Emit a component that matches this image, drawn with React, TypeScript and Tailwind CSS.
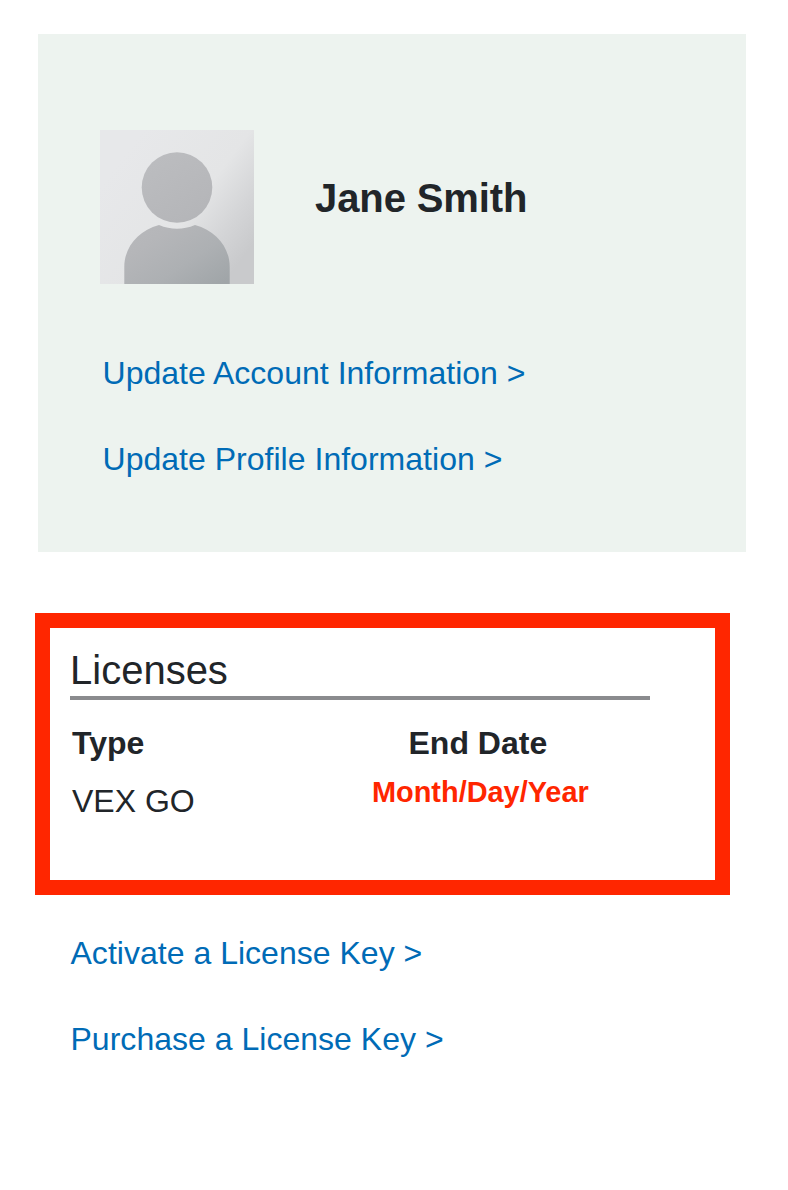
const link = "block w-max whitespace-nowrap text-[32px] leading-[40px] tracking-[0.02px] text-[#006bb6]";

export default function App() {
  return (
    <main className="h-[1190px] w-[788px] overflow-hidden bg-white font-['Liberation_Sans',Arial,sans-serif] text-[#212529]">
      <section className="ml-[38px] mt-[34px] h-[518px] w-[708px] bg-[#edf3ef] pt-[96px]">
        <div className="ml-[62px] flex h-[154px]">
          <svg width="154" height="154" viewBox="0 0 154 154" role="img" aria-label="Avatar">
            <defs>
              <linearGradient id="bg" gradientUnits="userSpaceOnUse" x1="20" y1="30" x2="145" y2="125">
                <stop offset="0" stopColor="#e7e8ea" />
                <stop offset="0.55" stopColor="#e4e5e6" />
                <stop offset="0.8" stopColor="#d4d5d7" />
                <stop offset="1" stopColor="#c9cacc" />
              </linearGradient>
              <linearGradient id="body" gradientUnits="userSpaceOnUse" x1="45" y1="25" x2="128" y2="150">
                <stop offset="0" stopColor="#bcbdc0" />
                <stop offset="0.5" stopColor="#b5b6b9" />
                <stop offset="0.75" stopColor="#adb0b3" />
                <stop offset="1" stopColor="#a0a5a8" />
              </linearGradient>
            </defs>
            <rect width="154" height="154" fill="url(#bg)" />
            <circle cx="77" cy="57.500" r="35.300" fill="url(#body)" />
            <path d="M24.300 154V137C24.300 117 38 101 59 95Q77 102.500 95 95C116 101 129.700 117 129.700 137V154Z" fill="url(#body)" />
          </svg>
          <h1 className="ml-[61px] mt-[44px] whitespace-nowrap text-[40px] font-bold leading-[48px] tracking-[-0.1px]">Jane Smith</h1>
        </div>
        <nav className="ml-[64.500px] mt-[69px] flex flex-col gap-[46px]">
          <a className={link}>Update Account Information &gt;</a>
          <a className={link}>Update Profile Information &gt;</a>
        </nav>
      </section>
      <section className="ml-[35px] mt-[61px] h-[282px] w-[695px] border-[15px] border-[#ff2600] pl-[20px] pt-[18px]">
        <h2 className="h-[54px] w-[580px] border-b-4 border-[#8a8b8e] text-[40px] leading-[48px]">Licenses</h2>
        <div className="ml-[2px] mt-[23px] flex text-[32px] leading-[40px]">
          <div className="w-[300px]">
            <div className="font-bold">Type</div>
            <div className="mt-[18px]">VEX GO</div>
          </div>
          <div>
            <div className="ml-[36.500px] font-bold">End Date</div>
            <div className="mt-[11px] text-[28.900px] font-bold leading-[36px] text-[#ff2600]">Month/Day/Year</div>
          </div>
        </div>
      </section>
      <nav className="ml-[70.500px] mt-[38px] flex flex-col gap-[46px]">
        <a className={link}>Activate a License Key &gt;</a>
        <a className={link}>Purchase a License Key &gt;</a>
      </nav>
    </main>
  );
}
